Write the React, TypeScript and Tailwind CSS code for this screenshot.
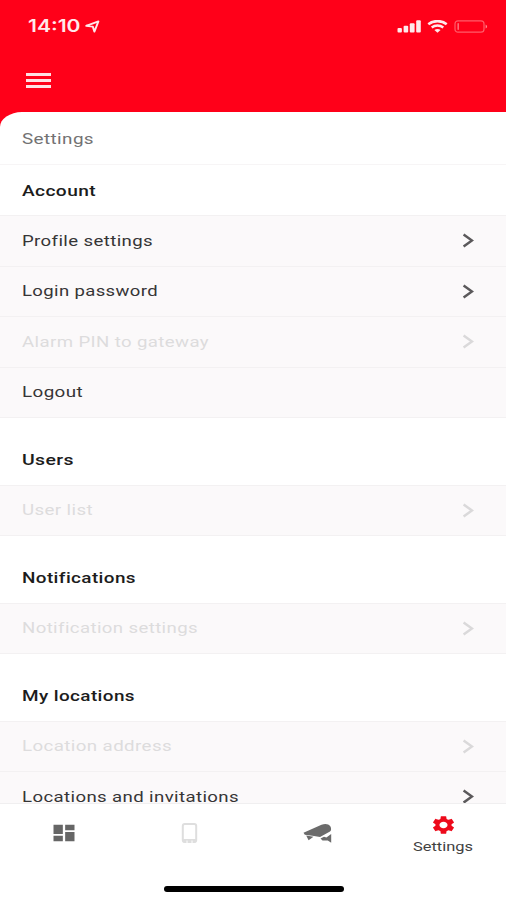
import { clsx } from "clsx";
import { MdDashboard, MdSettings } from "react-icons/md";

type Row = { label: string; width: string; disabled?: boolean; arrow?: boolean };
type Section = { title: string; width: string; rows: Row[] };

const sections: Section[] = [
  {
    title: "Account",
    width: "w-[74px]",
    rows: [
      { label: "Profile settings", width: "w-[131px]", arrow: true },
      { label: "Login password", width: "w-[136px]", arrow: true },
      { label: "Alarm PIN to gateway", width: "w-[187px]", arrow: true, disabled: true },
      { label: "Logout", width: "w-[61px]" },
    ],
  },
  {
    title: "Users",
    width: "w-[52px]",
    rows: [{ label: "User list", width: "w-[71px]", arrow: true, disabled: true }],
  },
  {
    title: "Notifications",
    width: "w-[114px]",
    rows: [{ label: "Notification settings", width: "w-[176px]", arrow: true, disabled: true }],
  },
  {
    title: "My locations",
    width: "w-[113px]",
    rows: [
      { label: "Location address", width: "w-[150px]", arrow: true, disabled: true },
      { label: "Locations and invitations", width: "w-[217px]", arrow: true },
    ],
  },
];

function StatusBar() {
  return (
    <div className="flex h-[52px] items-center pr-[18px] pl-7 text-[#ffe9eb]">
      <span className="origin-left scale-x-[1.24] font-[Inter,sans-serif] text-[17px] leading-none font-semibold">
        14:10
      </span>
      <svg className="ml-[15px] h-[13px] w-[15px]" viewBox="0 0 15 13" fill="none">
        <path d="M1.2 5.8 13.4 1.4 9.4 11.6 7.8 6.6Z" stroke="currentColor" strokeWidth="1.9" strokeLinejoin="round" />
      </svg>
      <svg className="ml-auto h-[13px] w-[24px]" viewBox="0 0 24 13" fill="currentColor">
        <rect x="0.5" y="8" width="4.4" height="4.6" rx="1" />
        <rect x="6.6" y="5.8" width="4.6" height="6.8" rx="1" />
        <rect x="12.8" y="3.2" width="4.8" height="9.4" rx="1" />
        <rect x="19.2" y="0.3" width="4.6" height="12.3" rx="1" />
      </svg>
      <svg className="ml-1.5 h-[13px] w-[21px]" viewBox="0 0 21 13" fill="none" stroke="currentColor">
        <path d="M1.3 4.2c5.2-4.1 13.2-4.1 18.4 0" strokeWidth="2.6" />
        <path d="M4.7 7.5c3.3-2.7 8.3-2.7 11.6 0" strokeWidth="2.4" />
        <path d="M7.4 10c1.8-1.4 4.4-1.4 6.2 0l-3.1 2.7Z" fill="currentColor" stroke="none" />
      </svg>
      <svg className="ml-[6px] h-[13px] w-[34px]" viewBox="0 0 34 13" fill="none">
        <rect x="1" y="0.8" width="29" height="11.4" rx="3" stroke="#ff5c6a" strokeWidth="1.2" />
        <rect x="3.4" y="3" width="1.6" height="7" rx="0.8" fill="#ff6b78" />
        <path d="M31.6 4.4c2 .9 2 3.3 0 4.2Z" fill="#ff8792" />
      </svg>
    </div>
  );
}

/* Wide lettering: the text is stretched to fill the given width. */
function Label({ text, width, className }: { text: string; width: string; className?: string }) {
  return (
    <svg className={clsx("h-6 shrink-0 overflow-visible", width)} fill="currentColor">
      <text
        x="0"
        y="17.2"
        textLength="100%"
        lengthAdjust="spacingAndGlyphs"
        className={clsx("font-[Roboto,sans-serif]", className ?? "text-[14.5px] tracking-[0.3px]")}
      >
        {text}
      </text>
    </svg>
  );
}

function SettingsRow({ label, width, disabled, arrow }: Row) {
  return (
    <div
      className={clsx(
        "flex h-[50.5px] shrink-0 items-center border-t border-[#f3f1f2] bg-[#fbf9fa] pr-8 pl-[21.5px]",
        disabled ? "text-[#dddcdd]" : "text-[#363536]",
      )}
    >
      <Label text={label} width={width} />
      {arrow && (
        <svg
          className={clsx("ml-auto h-[15px] w-3", disabled ? "text-[#dad9da]" : "text-[#5b595b]")}
          viewBox="0 0 12 15"
          fill="none"
        >
          <path d="M1.6 1.4 10 7.5 1.6 13.6" stroke="currentColor" strokeWidth="2.5" />
        </svg>
      )}
    </div>
  );
}

function TabBar() {
  return (
    <nav className="grid h-[97px] shrink-0 grid-cols-4 grid-rows-[60px_auto] border-t border-[#f0eff0] bg-white">
      <div className="flex justify-center pt-[18px] pl-px">
        <MdDashboard preserveAspectRatio="none" className="h-[22px] w-[28px] text-[#666]" />
      </div>
      <div className="flex justify-center pt-[18px]">
        <svg className="h-[22px] w-[17px]" viewBox="0 0 17 22" fill="none">
          <rect x="1.8" y="2" width="13.4" height="18" rx="2" stroke="#dedede" strokeWidth="2" />
          <path d="M2 17h13v3.5H2z" fill="#dedede" />
          <path d="M6 18.5v3M11 18.5v3" stroke="#fff" strokeWidth="1" />
        </svg>
      </div>
      <div className="flex justify-center pt-[19px] pl-0.5">
        <svg className="h-[21px] w-[29px]" viewBox="0 0 29 21" fill="#6b6b6b">
          <path d="M.5 9.8 18.5 1.8C22 .5 25.5.8 27.3 3.2 28.5 5 28.3 7.6 27 8.6L17 14 9.5 12.8 1.8 11.8Z" />
          <path d="M3.2 12.6 10.5 13.8 5.6 17.2Z" />
          <path d="M28.2 11V19.8L24.8 17.6H19.5L17.5 15.4 21 13.8 23.4 14.6Z" />
        </svg>
      </div>
      <div className="flex flex-col items-center pt-[10px] pl-px">
        <MdSettings preserveAspectRatio="none" className="h-[22px] w-[27px] text-[#ed0a1b]" />
        <div className="-mt-[2px] text-[#424242]">
          <Label text="Settings" width="w-[60px]" className="text-[12.5px]" />
        </div>
      </div>
      <div className="col-span-4 mt-[22px] ml-px h-[6px] w-[180px] justify-self-center rounded-full bg-black" />
    </nav>
  );
}

export default function App() {
  return (
    <div className="flex h-[900px] w-[506px] flex-col overflow-hidden bg-[#ff0019]">
      <header className="h-[112px] shrink-0">
        <StatusBar />
        <button className="mt-[21px] ml-[26px] flex flex-col gap-[3px]" aria-label="Menu">
          <span className="h-[3px] w-[25px] bg-[#ffe0e3]" />
          <span className="h-[3px] w-[25px] bg-[#ffe0e3]" />
          <span className="h-[3px] w-[25px] bg-[#ffe0e3]" />
        </button>
      </header>
      <main className="flex min-h-0 flex-1 flex-col overflow-hidden rounded-tl-[22px_15px] bg-white">
        <div className="flex h-[53px] shrink-0 items-center border-b border-[#f7f5f6] pt-px pl-[21.5px] text-[#737273]">
          <Label text="Settings" width="w-[72px]" />
        </div>
        {sections.map((section, i) => (
          <section key={section.title} className="shrink-0">
            <div
              className={clsx(
                "flex pl-[21.5px] text-[#1c1c1c]",
                i === 0 ? "h-[50px] items-center pt-px" : "h-[67.5px] items-end border-t border-[#f3f1f2] pb-[13px]",
              )}
            >
              <Label
                text={section.title}
                width={section.width}
                className="text-[14.5px] font-medium tracking-[0.3px]"
              />
            </div>
            {section.rows.map((row) => (
              <SettingsRow key={row.label} {...row} />
            ))}
          </section>
        ))}
      </main>
      <TabBar />
    </div>
  );
}
